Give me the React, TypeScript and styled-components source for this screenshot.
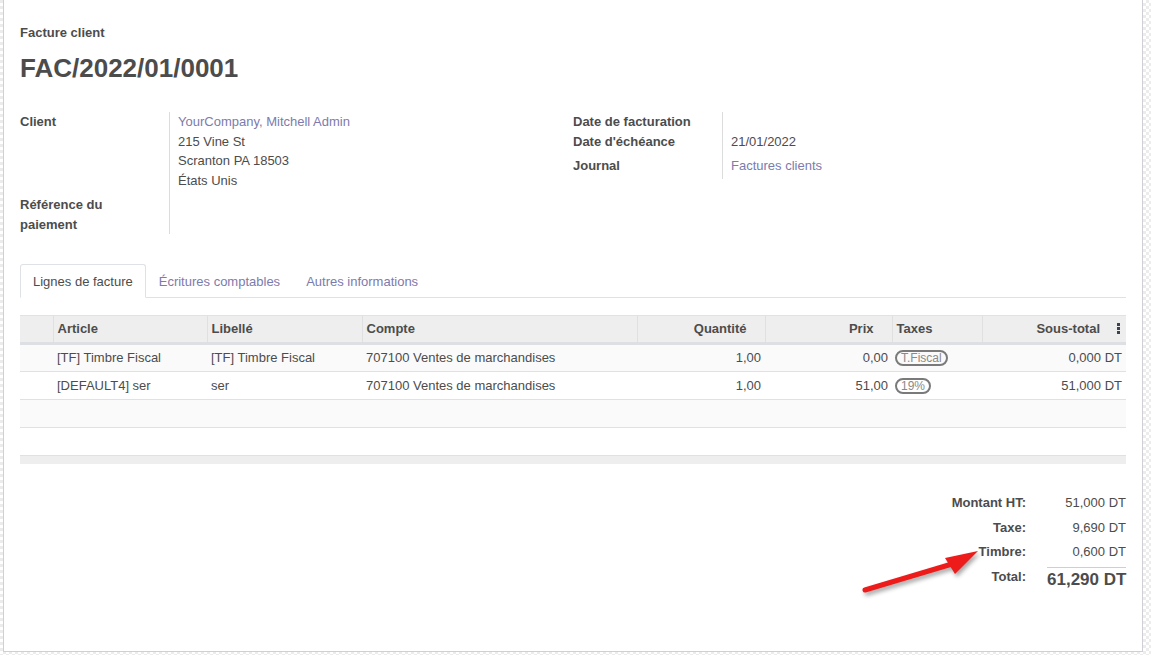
import styled, { createGlobalStyle } from "styled-components";

const GlobalStyle = createGlobalStyle`
  html, body {
    margin: 0;
    padding: 0;
  }
  body {
    font-family: "Liberation Sans", Arial, sans-serif;
    font-size: 13px;
    line-height: 1.5;
    color: #4c4c4c;
    background-color: #f3f3f3;
    background-image: repeating-conic-gradient(#ffffff 0 25%, #ececec 0 50%);
    background-size: 6px 6px;
  }
`;

interface ILine {
  article: string;
  label: string;
  account: string;
  qty: string;
  price: string;
  tax: string;
  subtotal: string;
}

const lines: ILine[] = [
  {
    article: "[TF] Timbre Fiscal",
    label: "[TF] Timbre Fiscal",
    account: "707100 Ventes de marchandises",
    qty: "1,00",
    price: "0,00",
    tax: "T.Fiscal",
    subtotal: "0,000 DT",
  },
  {
    article: "[DEFAULT4] ser",
    label: "ser",
    account: "707100 Ventes de marchandises",
    qty: "1,00",
    price: "51,00",
    tax: "19%",
    subtotal: "51,000 DT",
  },
];

const Arrow = () => (
  <ArrowBox width="125" height="52" viewBox="0 0 125 52">
    <line x1="7" y1="46" x2="94" y2="20" stroke="#ee1b1b" strokeWidth="5" strokeLinecap="round"/>
    <polygon points="120,7 87,14 97,30" fill="#ee1b1b" strokeLinejoin="round"/>
  </ArrowBox>
);

const App = () => {
  return (
    <Page>
      <GlobalStyle/>
      <Sheet>
        <Subtitle>Facture client</Subtitle>
        <Title>FAC/2022/01/0001</Title>

        <Groups>
          <FieldGroup>
            <Label $pb={5}>Client</Label>
            <Value $pb={5}>
              <Link>YourCompany, Mitchell Admin</Link>
              <div>215 Vine St</div>
              <div>Scranton PA 18503</div>
              <div>États Unis</div>
            </Value>
            <Label $narrow>Référence du paiement</Label>
            <Value/>
          </FieldGroup>

          <FieldGroup>
            <Label>Date de facturation</Label>
            <Value/>
            <Label $pb={5}>Date d'échéance</Label>
            <Value $pb={5}>21/01/2022</Value>
            <Label $pb={3}>Journal</Label>
            <Value $pb={3}><Link>Factures clients</Link></Value>
          </FieldGroup>
        </Groups>

        <Tabs>
          <Tab $active>Lignes de facture</Tab>
          <Tab>Écritures comptables</Tab>
          <Tab>Autres informations</Tab>
        </Tabs>

        <Table>
          <thead>
          <tr>
            <Th $width={33}/>
            <Th $width={154}>Article</Th>
            <Th $width={155}>Libellé</Th>
            <Th $width={275}>Compte</Th>
            <Th $width={128} $right>Quantité</Th>
            <Th $width={127} $right>Prix</Th>
            <Th $width={90}>Taxes</Th>
            <Th $width={144} $right $last>
              Sous-total
              <Kebab width="3" height="11" viewBox="0 0 3 11">
                <rect x="0" y="0" width="3" height="3" fill="#3c4250"/>
                <rect x="0" y="4" width="3" height="3" fill="#3c4250"/>
                <rect x="0" y="8" width="3" height="3" fill="#3c4250"/>
              </Kebab>
            </Th>
          </tr>
          </thead>
          <tbody>
          {lines.map((line, i) => (
            <Row key={i} $striped={i % 2 === 0}>
              <Td/>
              <Td>{line.article}</Td>
              <Td>{line.label}</Td>
              <Td>{line.account}</Td>
              <Td $right>{line.qty}</Td>
              <Td $right>{line.price}</Td>
              <Td $tight><Badge>{line.tax}</Badge></Td>
              <Td $right>{line.subtotal}</Td>
            </Row>
          ))}
          <Row $striped><Td colSpan={8}/></Row>
          <Row><Td colSpan={8}/></Row>
          </tbody>
          <tfoot>
          <tr><FootCell colSpan={8}/></tr>
          </tfoot>
        </Table>

        <Totals>
          <TotalLabel>Montant HT:</TotalLabel>
          <TotalValue>51,000 DT</TotalValue>
          <TotalLabel>Taxe:</TotalLabel>
          <TotalValue>9,690 DT</TotalValue>
          <TotalLabel>Timbre:</TotalLabel>
          <TotalValue>0,600 DT</TotalValue>
          <TotalLabel>Total:</TotalLabel>
          <GrandTotal>61,290 DT</GrandTotal>
        </Totals>
      </Sheet>
      <Arrow/>
    </Page>
  )
}

export default App;

const Page = styled.div`
  position: relative;
  width: 1151px;
  height: 655px;
  overflow: hidden;
`;

const Sheet = styled.div`
  box-sizing: border-box;
  margin-left: 3px;
  width: 1140px;
  height: 652px;
  padding: 23px 16px 0 16px;
  background: #ffffff;
  border: 1px solid #cfcfd6;
  border-top: none;
`;

const Subtitle = styled.div`
  font-weight: bold;
  line-height: 20px;
`;

const Title = styled.h1`
  margin: 9px 0 0;
  font-size: 26px;
  line-height: 32px;
  font-weight: bold;
  color: #4c4c4c;
`;

const Groups = styled.div`
  display: grid;
  grid-template-columns: 553px 1fr;
  margin-top: 28px;
`;

const FieldGroup = styled.div`
  display: grid;
  grid-template-columns: 149px 1fr;
  align-content: start;
`;

const Label = styled.div<{ $pb?: number; $narrow?: boolean }>`
  font-weight: bold;
  line-height: 19.5px;
  min-height: 19.5px;
  padding-bottom: ${p => p.$pb || 0}px;
  padding-right: ${p => p.$narrow ? 40 : 8}px;
`;

const Value = styled.div<{ $pb?: number }>`
  border-left: 1px solid #dcdcdc;
  padding-left: 8px;
  line-height: 19.5px;
  padding-bottom: ${p => p.$pb || 0}px;
`;

const Link = styled.div`
  color: #7c7bad;
`;

const Tabs = styled.div`
  display: flex;
  margin-top: 30px;
  border-bottom: 1px solid #dee2e6;
`;

const Tab = styled.div<{ $active?: boolean }>`
  height: 32px;
  line-height: 33px;
  padding: 0 12px;
  margin-bottom: -1px;
  border: 1px solid ${p => p.$active ? "#dee2e6" : "transparent"};
  border-bottom-color: ${p => p.$active ? "#ffffff" : "transparent"};
  border-radius: 3px 3px 0 0;
  background: ${p => p.$active ? "#ffffff" : "transparent"};
  color: ${p => p.$active ? "#4c4c4c" : "#7c7bad"};
`;

const Table = styled.table`
  width: 100%;
  margin-top: 17px;
  border-collapse: collapse;
  table-layout: fixed;
`;

const Th = styled.th<{ $width: number; $right?: boolean; $last?: boolean }>`
  width: ${p => p.$width}px;
  height: 28px;
  box-sizing: border-box;
  padding: 0 ${p => p.$last ? 6 : p.$right ? 18 : 4}px 0 4px;
  background: #eeeeee;
  border-top: 1px solid #e2e2e2;
  border-left: 1px solid #e0e0e0;
  border-bottom: 3px solid #dddfe3;
  text-align: ${p => p.$right ? "right" : "left"};
  font-weight: bold;
  white-space: nowrap;

  &:first-child {
    border-left: none;
  }
`;

const Kebab = styled.svg`
  margin-left: 17px;
  vertical-align: -1px;
`;

const Row = styled.tr<{ $striped?: boolean }>`
  background: ${p => p.$striped ? "#fafafa" : "#ffffff"};
  border-bottom: 1px solid #e1e1e1;
`;

const Td = styled.td<{ $right?: boolean; $tight?: boolean }>`
  height: 28px;
  box-sizing: border-box;
  padding: 0 4px 0 ${p => p.$tight ? 3 : 4}px;
  text-align: ${p => p.$right ? "right" : "left"};
  white-space: nowrap;
`;

const Badge = styled.span`
  display: inline-block;
  padding: 0 4px;
  border: 2px solid #7a7a7a;
  border-radius: 8px;
  font-size: 12px;
  line-height: 12px;
  color: #8a8a8a;
`;

const FootCell = styled.td`
  height: 8px;
  padding: 0;
  background: #eeeeee;
`;

const Totals = styled.div`
  display: grid;
  grid-template-columns: auto 79px;
  column-gap: 21px;
  justify-content: end;
  margin-top: 29px;
`;

const TotalLabel = styled.div`
  font-weight: bold;
  text-align: right;
  line-height: 20px;
  padding-bottom: 4.5px;
`;

const TotalValue = styled.div`
  text-align: right;
  line-height: 20px;
  padding-bottom: 4.5px;
`;

const GrandTotal = styled.div`
  text-align: right;
  border-top: 1px solid #cfcfcf;
  font-size: 17px;
  font-weight: bold;
  line-height: 24px;
  white-space: nowrap;
`;

const ArrowBox = styled.svg`
  position: absolute;
  left: 858px;
  top: 544px;
  filter: drop-shadow(2px 3px 2px rgba(0, 0, 0, 0.35));
`;
